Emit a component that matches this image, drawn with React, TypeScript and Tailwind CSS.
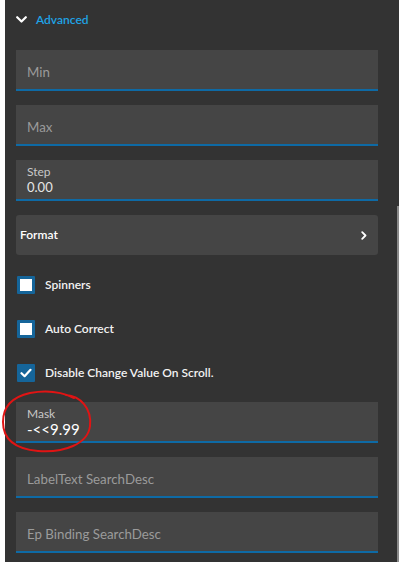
import React from "react";

const font = { fontFamily: "Lato, 'Noto Sans', sans-serif" };

function Field({
  label,
  value,
  placeholder,
  big,
}: {
  label?: string;
  value?: string;
  placeholder?: string;
  big?: boolean;
}) {
  return (
    <div className="h-[41px] w-[362px] bg-[#454545] border-b-2 border-[#0e6aa5] flex flex-col justify-center pl-[11px]">
      {placeholder ? (
        <span className="text-[13.3px] text-[#9b9b9b] leading-none mt-[6px]">{placeholder}</span>
      ) : (
        <>
          <span className="text-[12px] text-[#c8c8c8] leading-[14px] mt-[1px]">{label}</span>
          <span
            className={
              big
                ? "text-[15px] text-white leading-[17px]"
                : "text-[13px] text-[#e6e6e6] leading-[17px]"
            }
          >
            {value}
          </span>
        </>
      )}
    </div>
  );
}

function Check({ label, checked }: { label: string; checked?: boolean }) {
  return (
    <div className="h-[44px] flex items-center pt-[2px]">
      <div
        className={
          "w-[18px] h-[18px] ml-[1px] border-[3px] border-[#15659a] rounded-[1px] flex items-center justify-center " +
          (checked ? "bg-[#15659a]" : "bg-white")
        }
      >
        {checked && (
          <svg width="12" height="10" viewBox="0 0 12 10">
            <path d="M1.5 5.2 L4.6 8.2 L10.5 1.8" fill="none" stroke="white" strokeWidth="2.2" strokeLinecap="round" strokeLinejoin="round" />
          </svg>
        )}
      </div>
      <span className="ml-[10px] text-[12px] text-[#f2f2f2] font-semibold">{label}</span>
    </div>
  );
}

export default function App() {
  return (
    <div className="relative w-[399px] h-[562px] flex bg-white overflow-hidden" style={font}>
      <div className="w-[5px] bg-white" />
      <div className="flex-1 bg-[#333333] pl-[11px] flex flex-col">
        <div className="h-[40px] flex items-center">
          <svg width="11" height="7" viewBox="0 0 11 7" className="mt-[-1px]">
            <path d="M1.2 1.2 L5.5 5.5 L9.8 1.2" fill="none" stroke="white" strokeWidth="2.2" strokeLinecap="round" strokeLinejoin="round" />
          </svg>
          <span className="ml-[9px] text-[12px] text-[#1fa3e6] font-semibold">Advanced</span>
        </div>
        <div className="mt-[10px] flex flex-col gap-[14px]">
          <Field placeholder="Min" />
          <Field placeholder="Max" />
          <Field label="Step" value="0.00" />
          <div className="h-[40px] w-[362px] bg-[#454545] rounded-[3px] flex items-center justify-between pl-[4px] pr-[11px]">
            <span className="text-[12px] text-white font-semibold">Format</span>
            <svg width="6" height="9" viewBox="0 0 6 9">
              <path d="M1.2 1.2 L4.5 4.5 L1.2 7.8" fill="none" stroke="white" strokeWidth="1.8" strokeLinecap="round" strokeLinejoin="round" />
            </svg>
          </div>
        </div>
        <div className="mt-[7px] flex flex-col">
          <Check label="Spinners" />
          <Check label="Auto Correct" />
          <Check label="Disable Change Value On Scroll." checked />
        </div>
        <div className="mt-[8px] flex flex-col gap-[14px]">
          <Field label="Mask" value="-<<9.99" big />
          <Field placeholder="LabelText SearchDesc" />
          <Field placeholder="Ep Binding SearchDesc" />
        </div>
      </div>
      <div className="w-[2px] bg-[#333333] flex flex-col">
        <div className="h-[206px]" />
        <div className="flex-1 bg-[#8a8a8a]" />
      </div>
      <svg className="absolute left-0 top-0 pointer-events-none" width="399" height="562">
        <path
          d="M66 395 C80 396 92 408 90 426 C88 444 64 453 38 451 C16 449 3 440 3 422 C3 406 12 397 30 393 C46 390 62 392 74 398"
          fill="none"
          stroke="#e01414"
          strokeWidth="2"
          strokeLinecap="round"
        />
      </svg>
    </div>
  );
}
